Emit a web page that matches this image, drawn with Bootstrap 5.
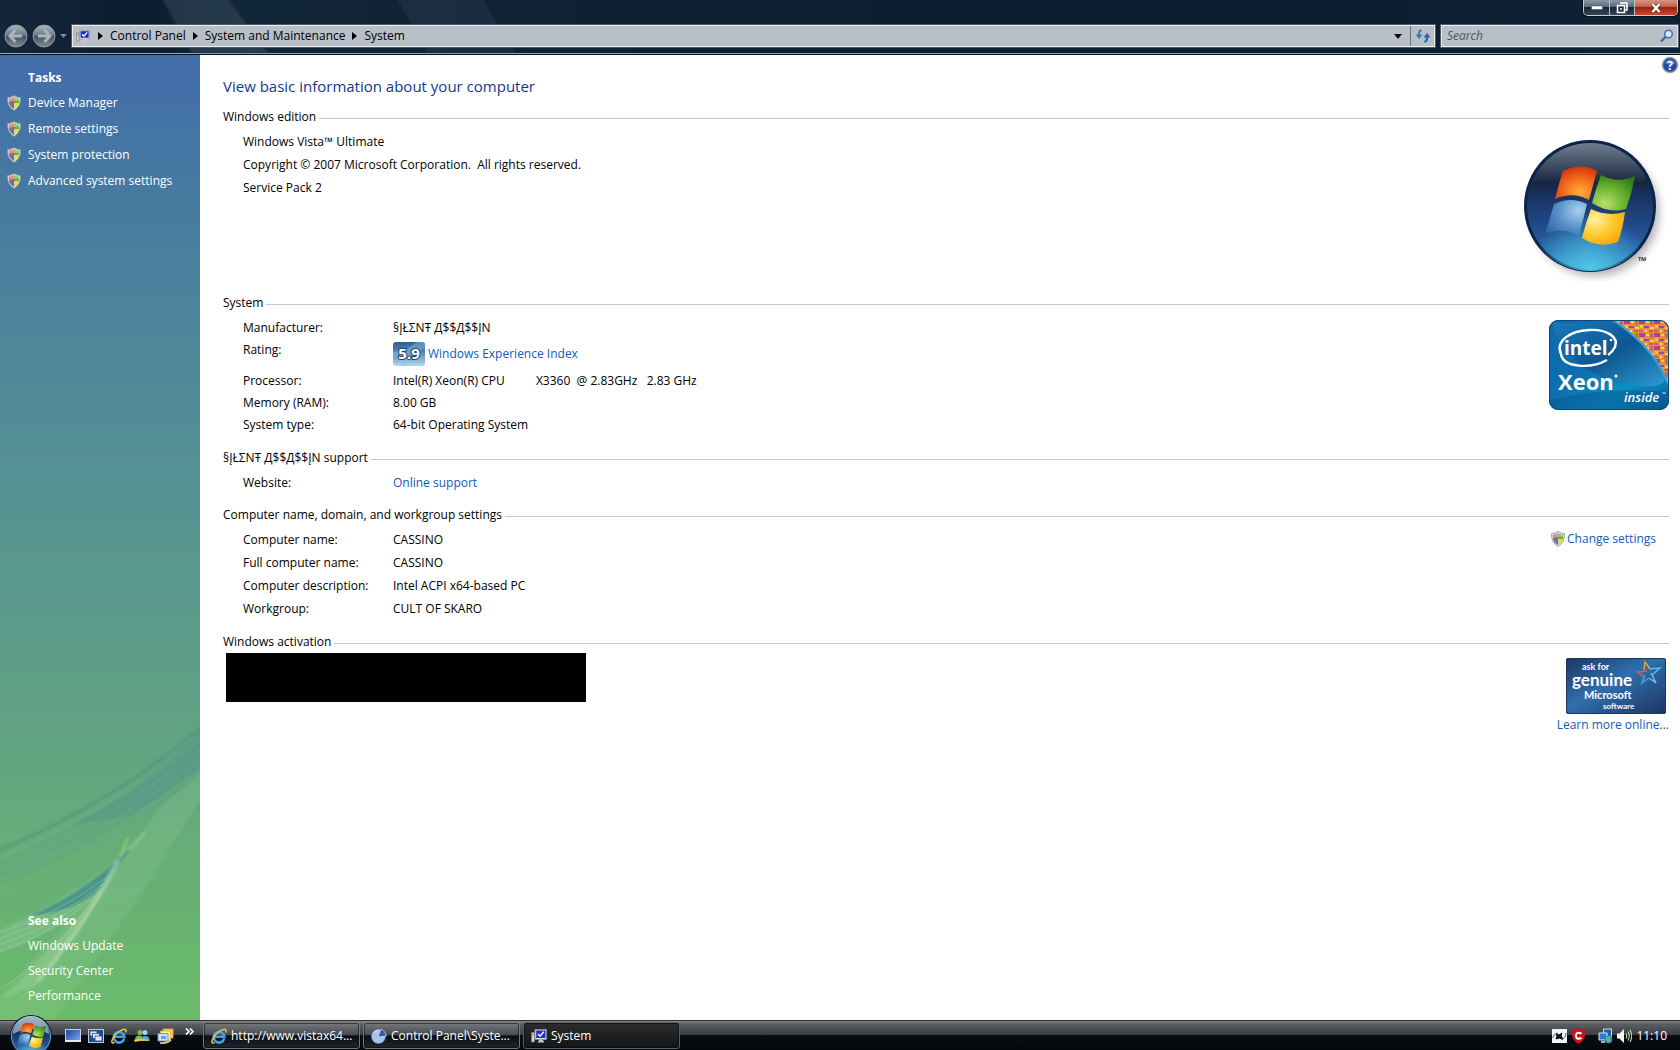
<!DOCTYPE html>
<html lang="en">
<head>
<meta charset="utf-8">
<meta name="viewport" content="width=device-width, initial-scale=1">
<title>System</title>
<link href="https://cdn.jsdelivr.net/npm/bootstrap@5.3.0/dist/css/bootstrap.min.css" rel="stylesheet">
<style>
  body { font-family: "Open Sans", "Noto Sans", sans-serif; font-size: 12px; line-height: 22px; color: #000; background: #fff; }
  a { text-decoration: none; color: #0f5cb8; }
  button { font: inherit; }
  svg { display: block; flex-shrink: 0; }
  svg text { font-family: "Open Sans", "Noto Sans", sans-serif; }
  svg .slogan text { font-family: Lato, sans-serif; font-weight: 700; }

  /* window frame */
  .frame-top { height: 55px; background: linear-gradient(90deg, #14263a, #0c1d2f 8%, #12263a 15%, #0e2135 30%, #0b1d31 70%, #0e2136); border-bottom: 1px solid #05101c; box-shadow: inset 0 -1px 0 #9aa6b2; position: relative; overflow: hidden; }
  .frame-top .streaks { position: absolute; inset: 0; width: 100%; height: 100%; }
  .cap-row { padding-right: 2px; }
  .caption-btns { border: 1px solid #c5ccd4; border-top: 0; border-radius: 0 0 5px 5px; overflow: hidden; height: 16px; box-shadow: 0 0 0 1px #05101c; }
  .caption-btns button { border: 0; padding: 0; height: 15px; width: 26px; display: flex; align-items: center; justify-content: center; background: linear-gradient(#8d99a5, #596877 45%, #16273a 50%, #33475b); border-right: 1px solid #b5bec8; }
  .caption-btns .cap-mid { width: 25px; }
  .caption-btns .cap-close { width: 42px; border-right: 0; background: linear-gradient(#d99584, #c15f4c 45%, #9e200f 50%, #c9482f); }
  .navrow { height: 24px; padding: 0 1px 0 4px; position: relative; }
  .round-btn { border: 0; background: none; padding: 0; width: 24px; height: 24px; }
  .bar-box { height: 24px; border: 1px solid #4d5963; background: #b9bfc6; box-shadow: inset 0 0 0 1px #e9edf0; }
  .address { flex: 1 1 auto; }
  .crumbs { display: flex; align-items: center; gap: 7px; margin-left: 8px; }
  .crumbs a { color: #000; }
  .addr-btn { border: 0; background: none; padding: 0; height: 20px; display: flex; align-items: center; justify-content: center; }
  .refresh { width: 25px; border-left: 1px solid #66717b; }
  .search-box { width: 239px; }
  .search-box input { border: 0; background: none; outline: 0; padding: 0 0 0 6px; min-width: 0; height: 22px; }
  .search-box input::placeholder { color: #50565c; font-style: italic; opacity: 1; }

  /* task pane */
  .task-pane { width: 200px; background: linear-gradient(#416dab, #487b9f 16%, #549095 42%, #60a184 68%, #66af76 84%, #6abb69); position: relative; padding: 10px 0 12px; }
  .task-pane .aurora { position: absolute; left: 0; bottom: 0; }
  .task-pane a, .pane-head { color: #fff; }
  .pane-head { font-size: 12px; font-weight: 700; line-height: 25px; margin: 0; padding-left: 28px; }
  .task-list a { display: flex; align-items: center; line-height: 26px; padding-left: 7px; gap: 7px; }
  .also-list a { display: block; line-height: 25px; padding-left: 28px; }
  .pane-part { position: relative; }

  /* details */
  .details { padding: 0 11px 20px 23px; min-width: 0; }
  .page-title { font-size: 15px; line-height: 24px; color: #15388c; font-weight: 400; margin: 19px 0 8px; }
  .help-btn { border: 0; background: none; padding: 0; width: 20px; height: 20px; margin-right: -11px; }
  .sect { margin-bottom: 11px; }
  .sect-short { margin-bottom: 10px; }
  .sect-head { display: flex; align-items: center; gap: 3px; font-size: 12px; line-height: 22px; font-weight: 400; margin: 0; }
  .sect-head::after { content: ""; flex: 1; height: 1px; background: #c4c6c9; margin-top: 2px; }
  .sect-body { display: flex; justify-content: space-between; padding: 3px 0 0 20px; }
  .sect-roomy .sect-body { padding-top: 2px; }
  .sect-roomy .facts, .edition { line-height: 23px; }
  .facts { margin: 0; display: grid; grid-template-columns: 150px auto; align-content: start; line-height: 22px; }
  .facts dt, .facts dd { margin: 0; font-weight: 400; white-space: pre; }
  .edition p { margin: 0; white-space: pre; }
  .rating-cell { display: flex; align-items: center; gap: 3px; height: 31px; padding-bottom: 2px; }
  .maker-badge { margin-top: 3px; }
  .change-link { gap: 2px; padding-right: 13px; }
  .blackout { width: 360px; height: 49px; background: #000; margin-left: 3px; }
  .genuine { margin: 5px 3px 0 auto; }

  /* taskbar */
  .taskbar { height: 30px; border-top: 1px solid #2c2e31; background: linear-gradient(#85888c, #5b5f63 10%, #3b3f44 47%, #0a0e13 50%, #04070b 100%); color: #fff; position: relative; line-height: 20px; }
  .start-btn { border: 0; background: none; padding: 0; width: 44px; margin: -7px 12px 0 9px; height: 36px; overflow: hidden; }
  .quick { gap: 7px; }
  .quick button, .tray button { border: 0; background: none; padding: 0; color: #fff; }
  .chev { margin-left: 4px; }
  .task-list-bar { gap: 3px; }
  .task-btn { width: 157px; height: 27px; border: 1px solid #73777b; border-radius: 3px; box-shadow: inset 0 0 0 1px rgba(0,0,0,.5); background: linear-gradient(#76797c, #4a4d51 46%, #0b0f14 52%, #20252b); color: #fff; text-align: left; padding: 0 7px; display: flex; align-items: center; gap: 4px; white-space: nowrap; overflow: hidden; }
  .task-btn.current { background: linear-gradient(#2c2c2d, #1f2021 50%, #141516); border-color: #5d6063; }
  .tray { gap: 4px; padding-right: 13px; }
</style>
<script src="https://cdn.jsdelivr.net/npm/bootstrap@5.3.0/dist/js/bootstrap.bundle.min.js"></script>
</head>
<body>

<!-- shared drawings -->
<svg width="0" height="0" class="position-absolute" aria-hidden="true">
  <defs>
    <radialGradient id="flagR" cx=".6" cy=".75" r=".8"><stop offset="0" stop-color="#ffb13a"/><stop offset=".5" stop-color="#f26a1c"/><stop offset="1" stop-color="#d42a08"/></radialGradient>
    <radialGradient id="flagG" cx=".3" cy=".8" r=".9"><stop offset="0" stop-color="#b9e06c"/><stop offset=".5" stop-color="#6db32e"/><stop offset="1" stop-color="#2f7a17"/></radialGradient>
    <radialGradient id="flagB" cx=".8" cy=".3" r="1"><stop offset="0" stop-color="#a8d0ee"/><stop offset=".5" stop-color="#5590c8"/><stop offset="1" stop-color="#2560a8"/></radialGradient>
    <radialGradient id="flagY" cx=".3" cy=".3" r=".9"><stop offset="0" stop-color="#fff3a0"/><stop offset=".5" stop-color="#fdc92a"/><stop offset="1" stop-color="#f09a0a"/></radialGradient>
    <linearGradient id="orb" x1="0" y1="0" x2="0" y2="1"><stop offset="0" stop-color="#6f7d8d"/><stop offset=".1" stop-color="#556375"/><stop offset=".32" stop-color="#172640"/><stop offset=".42" stop-color="#183362"/><stop offset=".7" stop-color="#234f91"/><stop offset=".88" stop-color="#2a70b0"/><stop offset="1" stop-color="#3a9bcb"/></linearGradient>
    <radialGradient id="orbGlow" cx=".5" cy="1" r=".45"><stop offset="0" stop-color="#4fc6ea"/><stop offset="1" stop-color="#4fc6ea" stop-opacity="0"/></radialGradient>
    <linearGradient id="ball" x1="0" y1="0" x2="0" y2="1"><stop offset="0" stop-color="#aeb7be"/><stop offset=".45" stop-color="#6d7a85"/><stop offset=".52" stop-color="#47545f"/><stop offset="1" stop-color="#7d8b96"/></linearGradient>
    <linearGradient id="xeon" x1="0" y1="0" x2="1" y2="1"><stop offset="0" stop-color="#0a6cae"/><stop offset=".45" stop-color="#0d6fb0"/><stop offset=".7" stop-color="#0c8fc6"/><stop offset="1" stop-color="#0a5f9c"/></linearGradient>
    <linearGradient id="xeonFold" x1="0" y1="0" x2="1" y2="1"><stop offset="0" stop-color="#1a78b8"/><stop offset=".5" stop-color="#0d5790"/><stop offset="1" stop-color="#2c9bd2"/></linearGradient>
    <linearGradient id="genu" x1="0" y1="0" x2="1" y2="1"><stop offset="0" stop-color="#1d3560"/><stop offset=".45" stop-color="#2f6fae"/><stop offset="1" stop-color="#1c3560"/></linearGradient>
    <linearGradient id="score" x1="0" y1="0" x2="0" y2="1"><stop offset="0" stop-color="#2b5f8f"/><stop offset=".5" stop-color="#5792c0"/><stop offset="1" stop-color="#b6dbf0"/></linearGradient>
    <linearGradient id="scr" x1="0" y1="0" x2="1" y2="1"><stop offset="0" stop-color="#1c3f9c"/><stop offset="1" stop-color="#7fb0ee"/></linearGradient>
    <pattern id="chip" width="15" height="13" patternUnits="userSpaceOnUse">
      <rect width="15" height="13" fill="#e58f3c"/><rect width="6" height="4" fill="#a8429a"/><rect x="7" y="1" width="3" height="2" fill="#f3d24c"/><rect x="11" width="3" height="5" fill="#d8605a"/><rect x="1" y="5" width="3" height="3" fill="#f2c63c"/><rect x="5" y="6" width="5" height="2" fill="#8a50a8"/><rect x="11" y="7" width="4" height="2" fill="#f4cf68"/><rect y="10" width="4" height="2" fill="#d0548a"/><rect x="6" y="10" width="2" height="2" fill="#f5e08a"/><rect x="10" y="10" width="4" height="2" fill="#c2643c"/>
    </pattern>
    <filter id="soft" x="-20%" y="-20%" width="140%" height="140%"><feGaussianBlur stdDeviation="4"/></filter>
    <filter id="haze"><feGaussianBlur stdDeviation="1"/></filter>
    <symbol id="flag" viewBox="0 0 90 80">
      <path d="M18 5Q36-4 52 5L44 34Q28 25 10 33Q14 17 18 5Z" fill="url(#flagR)"/>
      <path d="M56 9Q72 18 90 10Q87 27 81 43Q64 48 47 37Q51 22 56 9Z" fill="url(#flagG)"/>
      <path d="M9 38Q26 30 42 38L34 70Q18 60 0 68Q5 52 9 38Z" fill="url(#flagB)"/>
      <path d="M46 43Q62 51 80 46Q78 62 73 76Q54 83 37 72Q41 56 46 43Z" fill="url(#flagY)"/>
    </symbol>
    <symbol id="shield" viewBox="0 0 14 16">
      <path d="M7 .5Q9.500 2.300 13.500 2.500Q14 11.500 7 15.500Q0 11.500 .5 2.500Q4.500 2.300 7 .5Z" fill="#d9dde0" stroke="#8d9499" stroke-width=".8"/>
      <path d="M7 2.200V8H2.100Q1.900 5.500 2 3.800Q5 3.700 7 2.200Z" fill="#e0503f"/><path d="M7 2.200Q9 3.700 12 3.800Q12.100 5.500 11.900 8H7Z" fill="#63ad46"/>
      <path d="M7 8V14Q2.800 11.500 2.100 8Z" fill="#4a78d2"/><path d="M7 8H11.900Q11.200 11.500 7 14Z" fill="#f5d548"/>
      <path d="M2.200 4Q5 4 7 2.500Q9 4 11.800 4V6Q7 5 2.200 7Z" fill="#fff" opacity=".35"/>
    </symbol>
    <symbol id="pc" viewBox="0 0 16 16">
      <path d="M.5 4.500H3.500V14H.5Z" fill="#d8d6c8" stroke="#77776c" stroke-width=".8"/><path d="M1.200 6.500H3" stroke="#6b6b60" stroke-width=".7"/>
      <path d="M4 1.500H15.500V11.500H4Z" fill="#dcdce4" stroke="#8c8ca0" stroke-width=".7"/><path d="M5.200 2.500H14.500V10H5.200Z" fill="#1a2fc8"/>
      <path d="M7 6L9 8.200L12.800 3.800" fill="none" stroke="#fff" stroke-width="1.500"/><path d="M8.500 11.500H11.500L13.500 14.500H6.500Z" fill="#c7c7d2"/>
    </symbol>
    <symbol id="ie" viewBox="0 0 16 16">
      <path d="M13.200 10.500A5.300 5.300 0 1 1 13.300 8.700H4" fill="none" stroke="#3fa4ea" stroke-width="2.600"/>
      <path d="M3.500 14.500C-1.500 17 1 9 7.500 4C12.500 .2 16.500 .5 14.500 4.500" fill="none" stroke="#f3c23c" stroke-width="1.500"/>
    </symbol>
  </defs>
</svg>

<div class="d-flex flex-column min-vh-100">

  <header class="frame-top">
    <svg class="streaks" viewBox="0 0 1680 55" preserveAspectRatio="none" aria-hidden="true">
      <g filter="url(#haze)"><path d="M160 -5H225L272 60H195Z" fill="#5c7288" opacity=".26"/><path d="M395 -5H480L520 60H430Z" fill="#5c7288" opacity=".14"/></g>
    </svg>
    <div class="cap-row d-flex justify-content-end position-relative mb-2">
      <div class="caption-btns d-flex">
        <button type="button" aria-label="Minimize"><svg width="12" height="5"><path d="M.5 1H11.500V4.500H.5Z" fill="#fff" stroke="#45505c" stroke-width=".5"/></svg></button>
        <button type="button" class="cap-mid" aria-label="Restore"><svg width="12" height="12"><path d="M4 1H11V8H9M1.500 3.500H8.500V10.500H1.500Z" fill="none" stroke="#fff" stroke-width="1.600"/><path d="M4.500 6.500H5.500V7.500H4.500Z" fill="none" stroke="#fff"/></svg></button>
        <button type="button" class="cap-close" aria-label="Close"><svg width="12" height="10"><path d="M2.500 1L9.500 9M9.500 1L2.500 9" stroke="#5c2a22" stroke-width="3.600"/><path d="M2.500 1L9.500 9M9.500 1L2.500 9" stroke="#fff" stroke-width="2.400"/></svg></button>
      </div>
    </div>
    <div class="navrow d-flex align-items-center">
      <button type="button" class="round-btn" aria-label="Back"><svg width="24" height="24"><circle cx="12" cy="12" r="11" fill="url(#ball)" stroke="#8f9ba5"/><path d="M11.500 6L6 12L11.500 18M6.500 12H18" fill="none" stroke="#a9b4bc" stroke-width="3"/></svg></button>
      <button type="button" class="round-btn ms-1" aria-label="Forward"><svg width="24" height="24"><circle cx="12" cy="12" r="11" fill="url(#ball)" stroke="#8f9ba5"/><path d="M12.500 6L18 12L12.500 18M17.500 12H6" fill="none" stroke="#a9b4bc" stroke-width="3"/></svg></button>
      <button type="button" class="addr-btn px-1" aria-label="Recent pages"><svg width="7" height="5"><path d="M0 0H7L3.500 4Z" fill="#7f8b96"/></svg></button>
      <nav class="bar-box address d-flex align-items-center ps-1" aria-label="Address">
        <svg width="14" height="14"><use href="#pc"/></svg>
        <div class="crumbs">
          <svg width="5" height="8"><path d="M0 0L5 4L0 8Z"/></svg><a href="#">Control Panel</a>
          <svg width="5" height="8"><path d="M0 0L5 4L0 8Z"/></svg><a href="#">System and Maintenance</a>
          <svg width="5" height="8"><path d="M0 0L5 4L0 8Z"/></svg><a href="#">System</a>
        </div>
        <button type="button" class="addr-btn ms-auto px-2" aria-label="Previous locations"><svg width="8" height="5"><path d="M0 0H8L4 5Z" fill="#0a0a30"/></svg></button>
        <button type="button" class="addr-btn refresh" aria-label="Refresh"><svg width="16" height="14"><path d="M6.500 1Q4 2 4 4.500V6" fill="none" stroke="#2f7fc4" stroke-width="2"/><path d="M.5 5.500H7.500L4 10Z" fill="#2f7fc4"/><path d="M9.500 13Q12 12 12 9.500V8" fill="none" stroke="#2563ae" stroke-width="2"/><path d="M8.500 8.500H15.500L12 4Z" fill="#2563ae"/></svg></button>
      </nav>
      <div class="bar-box search-box d-flex align-items-center ms-1 pe-1">
        <input class="flex-grow-1" type="text" placeholder="Search" aria-label="Search">
        <svg width="14" height="14"><circle cx="8.500" cy="5" r="3.800" fill="#d8e7f4" stroke="#3b76b8" stroke-width="1.600"/><path d="M5.500 8L1 12.500" stroke="#3a5fa8" stroke-width="2.200"/></svg>
      </div>
    </div>
  </header>

  <div class="d-flex flex-grow-1">
    <aside class="task-pane d-flex flex-column justify-content-between flex-shrink-0">
      <svg class="aurora" width="200" height="320" viewBox="0 0 200 320" aria-hidden="true">
        <g fill="none" filter="url(#haze)">
          <path d="M-5 152Q110 105 205 25" stroke="#42907f" stroke-width="4" opacity=".4"/>
          <path d="M0 160Q110 115 205 38V74Q120 135 0 185Z" fill="#4a958c" opacity=".16"/>
          <path d="M70 125Q150 85 205 26V66Q170 90 130 116Z" fill="#45888f" opacity=".3"/>
          <path d="M0 158Q110 112 205 36M0 168Q110 122 205 46M0 180Q110 132 205 56M0 195Q110 142 205 64" stroke="#8bc69c" opacity=".3"/>
          <path d="M205 68V92Q150 185 50 325H-5V300Q100 190 160 108Z" fill="#9acb9b" opacity=".2"/>
          <path d="M145 133Q90 190 -5 232V254Q60 235 100 190Z" fill="#8ec79b" opacity=".4"/>
          <path d="M138 140Q90 190 30 216Q75 212 100 190Z" fill="#33838d" opacity=".65"/>
          <path d="M130 142Q95 215 35 285L0 300Q80 225 112 170Z" fill="#c6e2b5" opacity=".22"/>
          <path d="M118 160Q92 215 38 282" stroke="#c0dfc8" stroke-width="5" opacity=".4"/>
          <path d="M145 133L128 150M128 138L120 156" stroke="#9fd178" stroke-width="3" opacity=".6"/>
        </g>
        <g fill="none">
          <path d="M-5 234Q60 214 110 175M-5 240Q60 220 108 180M-5 246Q60 226 104 184M-5 253Q60 232 100 190" stroke="#b4dcb3" opacity=".35"/>
          <path d="M0 290Q60 250 100 190M20 300Q70 250 104 188" stroke="#c3e2a4" stroke-width="2" opacity=".18"/>
        </g>
      </svg>
      <nav class="pane-part task-list" aria-label="Tasks">
        <h2 class="pane-head">Tasks</h2>
        <a href="#"><svg width="14" height="16"><use href="#shield"/></svg><span>Device Manager</span></a>
        <a href="#"><svg width="14" height="16"><use href="#shield"/></svg><span>Remote settings</span></a>
        <a href="#"><svg width="14" height="16"><use href="#shield"/></svg><span>System protection</span></a>
        <a href="#"><svg width="14" height="16"><use href="#shield"/></svg><span>Advanced system settings</span></a>
      </nav>
      <nav class="pane-part also-list" aria-label="See also">
        <h2 class="pane-head">See also</h2>
        <a href="#">Windows Update</a>
        <a href="#">Security Center</a>
        <a href="#">Performance</a>
      </nav>
    </aside>

    <main class="details flex-grow-1">
      <div class="d-flex justify-content-between align-items-start">
        <h1 class="page-title">View basic information about your computer</h1>
        <button type="button" class="help-btn" aria-label="Help"><svg width="20" height="20"><circle cx="10" cy="10" r="7.500" fill="#2648a8" stroke="#8f9dad" stroke-width="1.500"/><path d="M4.500 8Q10 1 15.500 8Q10 11 4.500 8Z" fill="#7e9ee0" opacity=".6"/><text x="10" y="14.500" text-anchor="middle" font-size="12" font-weight="700" fill="#fff">?</text></svg></button>
      </div>

      <section class="sect sect-roomy">
        <h2 class="sect-head">Windows edition</h2>
        <div class="sect-body">
          <div class="edition"><p>Windows Vista™ Ultimate</p><p>Copyright © 2007 Microsoft Corporation.  All rights reserved.</p><p>Service Pack 2</p></div>
          <svg width="154" height="151" viewBox="1515 130 154 151" role="img" aria-label="Windows logo">
            <circle cx="1595" cy="212" r="64" fill="#667" opacity=".5" filter="url(#soft)"/>
            <circle cx="1590" cy="206" r="66" fill="#0c2447"/>
            <circle cx="1590" cy="206" r="63" fill="url(#orb)"/>
            <circle cx="1590" cy="206" r="65" fill="url(#orbGlow)"/>
            <svg x="1545" y="166" width="90" height="80"><use href="#flag"/></svg>
            <text x="1638" y="265" font-size="11" font-weight="700">™</text>
          </svg>
        </div>
      </section>

      <section class="sect">
        <h2 class="sect-head">System</h2>
        <div class="sect-body">
          <dl class="facts">
            <dt>Manufacturer:</dt><dd>§ĮŁΣNŦ Д$$Д$$ĮN</dd>
            <dt>Rating:</dt>
            <dd class="rating-cell"><svg width="32" height="24"><rect width="32" height="24" rx="3" fill="url(#score)"/><path d="M0 10L14 7L24 0H29A3 3 0 0 1 32 3V6L17 12L13 24H8L10 13L0 15Z" fill="#8fc3e6" opacity=".45"/><text x="16" y="17" text-anchor="middle" font-size="15" font-weight="700" fill="#fff" stroke="#24466b" stroke-width="2" paint-order="stroke">5.9</text></svg><a href="#">Windows Experience Index</a></dd>
            <dt>Processor:</dt><dd>Intel(R) Xeon(R) CPU          X3360  @ 2.83GHz   2.83 GHz</dd>
            <dt>Memory (RAM):</dt><dd>8.00 GB</dd>
            <dt>System type:</dt><dd>64-bit Operating System</dd>
          </dl>
          <svg class="maker-badge" width="120" height="90" role="img" aria-label="Intel Xeon inside">
            <clipPath id="badgeClip"><rect width="120" height="90" rx="9"/></clipPath>
            <g clip-path="url(#badgeClip)">
              <rect width="120" height="90" fill="url(#xeon)"/>
              <path d="M64 0H120V66Q104 28 64 0Z" fill="url(#chip)"/>
              <path d="M4 3H66Q104 26 117 58Q114 68 92 66Q50 62 26 40Q8 24 4 3Z" fill="url(#xeonFold)"/>
              <path d="M64 0Q106 28 120 66" fill="none" stroke="#2fa4dc" stroke-width="2"/>
              <path d="M0 80Q60 66 120 72V90H0Z" fill="#074f85" opacity=".45"/>
            </g>
            <rect x=".5" y=".5" width="119" height="89" rx="9" fill="none" stroke="#0d4a78"/>
            <path d="M12 34C6 20 22 11 40 10C58 9 70 17 66 27C64 31 62 33 59 35M12 34C14 48 42 49 58 40" fill="none" stroke="#fff" stroke-width="2.400"/>
            <text x="15" y="35" font-size="19" font-weight="700" fill="#fff">intel</text>
            <text x="9" y="70" font-size="22" font-weight="700" fill="#fff">Xeon</text><circle cx="67" cy="56" r="1.500" fill="#fff"/><circle cx="62" cy="20" r="1.300" fill="#fff"/>
            <text x="75" y="82" font-size="13" font-weight="600" font-style="italic" fill="#fff">inside</text><text x="113" y="76" font-size="5" fill="#fff">™</text>
          </svg>
        </div>
      </section>

      <section class="sect sect-short">
        <h2 class="sect-head">§ĮŁΣNŦ Д$$Д$$ĮN support</h2>
        <div class="sect-body">
          <dl class="facts"><dt>Website:</dt><dd><a href="#">Online support</a></dd></dl>
        </div>
      </section>

      <section class="sect sect-roomy">
        <h2 class="sect-head">Computer name, domain, and workgroup settings</h2>
        <div class="sect-body">
          <dl class="facts">
            <dt>Computer name:</dt><dd>CASSINO</dd>
            <dt>Full computer name:</dt><dd>CASSINO</dd>
            <dt>Computer description:</dt><dd>Intel ACPI x64-based PC</dd>
            <dt>Workgroup:</dt><dd>CULT OF SKARO</dd>
          </dl>
          <a class="change-link d-flex align-self-start align-items-center" href="#"><svg width="14" height="16"><use href="#shield"/></svg><span>Change settings</span></a>
        </div>
      </section>

      <section>
        <h2 class="sect-head">Windows activation</h2>
        <div class="d-flex justify-content-between">
          <div class="blackout"></div>
          <div class="text-end">
            <svg class="genuine" width="100" height="56" role="img" aria-label="ask for genuine Microsoft software">
              <rect width="100" height="56" rx="2" fill="url(#genu)"/><rect x=".5" y=".5" width="99" height="55" rx="2" fill="none" stroke="#20365c"/>
              <g class="slogan" fill="#fff"><text x="16" y="12" font-size="9">ask for</text><text x="6" y="28" font-size="17">genuine</text><text x="18" y="41" font-size="11">Microsoft</text><text x="37" y="51" font-size="8">software</text></g>
              <g fill="none" stroke-width="1.500"><path d="M78 12L79 4L84 11" stroke="#f0a03a"/><path d="M81 13L72 14L78 19" stroke="#e35d4c"/><path d="M84 11L94 10L86 17" stroke="#59bfe8"/><path d="M85 15L90 25L83 20" stroke="#62c4e0"/><path d="M79 17L76 25L83 20" stroke="#4a9fe0"/></g>
            </svg>
            <a href="#">Learn more online...</a>
          </div>
        </div>
      </section>
    </main>
  </div>

  <footer class="taskbar d-flex align-items-center">
    <button type="button" class="start-btn align-self-start" aria-label="Start"><svg width="44" height="44"><circle cx="22" cy="22" r="21" fill="#0a1826"/><circle cx="22" cy="22" r="19.500" fill="url(#orb)" stroke="#7fa4c0"/><path d="M4 20A18 18 0 0 1 40 20Q22 10 4 20Z" fill="#bfd6e6" opacity=".65"/><circle cx="22" cy="22" r="19" fill="url(#orbGlow)"/><svg x="8" y="8" width="29" height="27"><use href="#flag"/></svg></svg></button>
    <div class="quick d-flex align-items-center">
      <button type="button" aria-label="Show desktop"><svg width="16" height="14"><rect x=".5" y=".5" width="15" height="12" fill="url(#scr)" stroke="#c9d3dd"/><path d="M0 12H16" stroke="#e6ebf0" stroke-width="2"/></svg></button>
      <button type="button" aria-label="Switch between windows"><svg width="16" height="14"><rect x=".5" y=".5" width="15" height="13" fill="#1f4a94" stroke="#bac8d8"/><g fill="#dfe9f5" stroke="#1f3f78" stroke-width=".7"><rect x="2" y="2" width="7" height="5"/><rect x="4.500" y="4.500" width="7" height="5"/><rect x="7" y="7" width="7" height="5"/></g></svg></button>
      <button type="button" aria-label="Internet Explorer"><svg width="16" height="16"><use href="#ie"/></svg></button>
      <button type="button" aria-label="Messenger"><svg width="16" height="16"><circle cx="6" cy="4.500" r="2.500" fill="#7cc14a"/><path d="M1 12Q1 7 6 7.500Q9 7.500 9 12Z" fill="#6fbf45"/><circle cx="11" cy="4.500" r="2.500" fill="#a6d2ee"/><path d="M7 13Q7 8 11 8Q16 8 15.500 13Z" fill="#58a8dc"/><path d="M0 12Q8 9 16 13Q8 12 1 14Z" fill="#f3c23c"/></svg></button>
      <button type="button" aria-label="Mail"><svg width="17" height="16"><path d="M6 1H16V10H6Z" fill="#f6dd7b" stroke="#d79d22"/><path d="M3.500 3H13.500V12H3.500Z" fill="#fdf3c0" stroke="#e2ae38"/><path d="M1 5.500H11V13H1Z" fill="#cfe2f5" stroke="#6a94c4"/><path d="M4 8H9V11H4Z" fill="#6e9fd8"/><path d="M3 15Q9 16 14 12" fill="none" stroke="#d8c27a" stroke-width="2"/></svg></button>
      <button type="button" class="chev align-self-start" aria-label="More"><svg width="10" height="8"><path d="M1 .5L4 3.500L1 6.500M5 .5L8 3.500L5 6.500" fill="none" stroke="#fff" stroke-width="1.600"/></svg></button>
    </div>
    <div class="task-list-bar d-flex ms-2">
      <button type="button" class="task-btn"><svg width="16" height="16"><use href="#ie"/></svg><span>http://www.vistax64...</span></button>
      <button type="button" class="task-btn"><svg width="16" height="16"><circle cx="7.500" cy="8.500" r="7" fill="#a9c3ea" stroke="#6c8cc0" stroke-width=".7"/><path d="M7 9L10 1Q14 2.500 15.500 8Z" fill="#2f58a8" stroke="#cfe0f5" stroke-width=".7"/><path d="M2 6Q4 2 8 2" fill="none" stroke="#fff" opacity=".7"/></svg><span>Control Panel\Syste...</span></button>
      <button type="button" class="task-btn current"><svg width="16" height="16"><use href="#pc"/></svg><span>System</span></button>
    </div>
    <div class="tray d-flex align-items-center ms-auto">
      <button type="button" aria-label="Graphics settings"><svg width="15" height="14"><rect width="15" height="14" fill="#f2f4f5"/><path d="M4 5L7 6L10 4L9 7L11 10L7 9L4 10L5 7Z" fill="#111" stroke="#111"/><path d="M1 9Q1 5 6 4M14 4Q14 9 9 11" fill="none" stroke="#3a5878"/></svg></button>
      <button type="button" aria-label="Antivirus"><svg width="15" height="16"><path d="M7.500 0Q11 2 14.500 2Q15 12 7.500 16Q0 12 .5 2Q4 2 7.500 0Z" fill="#c8141e"/><path d="M10.500 5.500Q5 3 5 8Q5 12 10.500 10" fill="none" stroke="#fff" stroke-width="2"/></svg></button>
      <button type="button" class="ms-2" aria-label="Network"><svg width="15" height="16"><path d="M5.500 1H13.500V8.500H5.500Z" fill="#1f5fb8" stroke="#cfe0f2"/><path d="M1 5H9V12H1Z" fill="#2c78cf" stroke="#dce8f5"/><path d="M3 14H7" stroke="#dce8f5" stroke-width="1.500"/><circle cx="10.500" cy="11.500" r="3.800" fill="#2f8fe0"/><path d="M8 10Q10 8 12.500 9Q11 11 12.500 13Q10 15 9 13Z" fill="#5fc44e"/></svg></button>
      <button type="button" aria-label="Volume"><svg width="15" height="16"><path d="M0 5.500H2.500L7 1V15L2.500 10.500H0Z" fill="#f2f4f6"/><path d="M9 5.500Q10.500 8 9 10.500M11 3.500Q13.500 8 11 12.500M13 2Q16.500 8 13 14" fill="none" stroke="#b9e0b5" stroke-width="1.100"/></svg></button>
      <time>11:10</time>
    </div>
  </footer>
</div>
</body>
</html>
